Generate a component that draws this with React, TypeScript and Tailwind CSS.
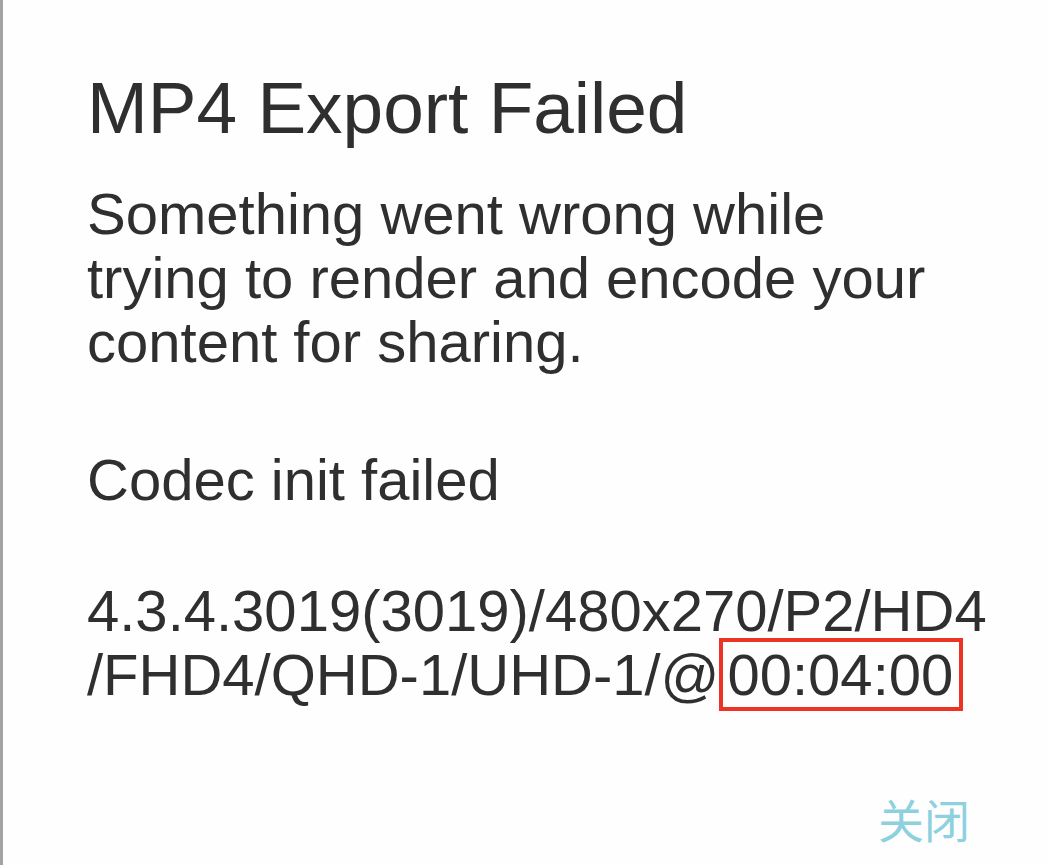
export default function App() {
  const bodyFont = { fontFamily: '"Liberation Sans", Arial, sans-serif' };

  return (
    <div
      className="h-[865px] w-full overflow-hidden border-l-[3px] border-[#a3a3a3] bg-[#fefefe] text-[#2f2f2f]"
      style={bodyFont}
    >
      <div className="pl-[84px] pr-[40px]">
        {/* Title */}
        <h1 className="pt-[66px] text-[73px] leading-[84px] font-normal">MP4 Export Failed</h1>

        {/* Message */}
        <div className="mt-[32px] text-[58px] leading-[64px]">
          <p>
            <span className="block">Something went wrong while</span>
            <span className="block">trying to render and encode your</span>
            <span className="block">content for sharing.</span>
          </p>

          <p className="mt-[74px]">Codec init failed</p>

          <p className="mt-[67px]">
            <span className="block">4.3.4.3019(3019)/480x270/P2/HD4</span>
            <span className="block">
              /FHD4/QHD-1/UHD-1/@
              <span className="border-4 border-[#ec3324] pl-[4px] pr-[6px]">00:04:00</span>
            </span>
          </p>
        </div>

        {/* Action */}
        <div className="mt-[86px] flex justify-end pr-[38px]">
          <button
            className="text-[46px] leading-[50px] text-[#8dd1de]"
            style={{ fontFamily: '"Noto Sans CJK SC", "Noto Sans", sans-serif' }}
          >
            关闭
          </button>
        </div>
      </div>
    </div>
  );
}
